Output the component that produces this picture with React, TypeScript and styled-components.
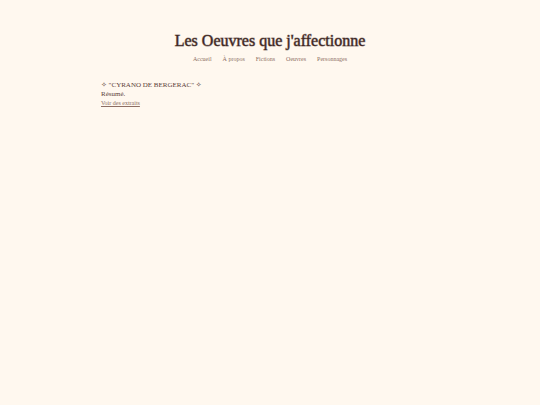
import styled, {createGlobalStyle} from "styled-components";

const links = [
    {label: "Accueil", href: "#accueil"},
    {label: "À propos", href: "#a-propos"},
    {label: "Fictions", href: "#fictions"},
    {label: "Oeuvres", href: "#oeuvres"},
    {label: "Personnages", href: "#personnages"},
];

export default function App() {
    return <>
        <GlobalStyle/>
        <Page>
            <Header>
                <Title>Les Oeuvres que j'affectionne</Title>
                <Nav>
                    {links.map(({label, href}) => (
                        <NavLink key={href} href={href}>{label}</NavLink>
                    ))}
                </Nav>
            </Header>
            <Main>
                <Work>
                    <WorkTitle>✧ "CYRANO DE BERGERAC" ✧</WorkTitle>
                    <Summary>Résumé.</Summary>
                    <ExtractLink href="#extraits">Voir des extraits</ExtractLink>
                </Work>
            </Main>
        </Page>
    </>
}

const GlobalStyle = createGlobalStyle`
    body {
        margin: 0;
        background-color: #fff8ef;
        color: #5d4037;
        font-family: "Liberation Serif", "DejaVu Sans", serif;
        font-size: 7px;
        line-height: 9px;
    }
`;

const Page = styled.div`
    display: flex;
    flex-direction: column;
    gap: 17px;
    padding: 28px 20px;
`;

const Header = styled.header`
    display: flex;
    flex-direction: column;
    align-items: center;
    gap: 2px;
`;

const Title = styled.h1`
    margin: 0;
    color: #3e2723;
    font-size: 16px;
    font-weight: 400;
    line-height: 25px;
    text-align: center;
    -webkit-text-stroke: 1px #3e272380;
`;

const Nav = styled.nav`
    display: flex;
    flex-wrap: wrap;
    justify-content: center;
    gap: 11px;
`;

const NavLink = styled.a`
    color: #8d6e63;
    font-size: 6px;
    text-decoration: none;

    &:hover {
        text-decoration: underline;
    }
`;

const Main = styled.main`
    box-sizing: border-box;
    width: 100%;
    max-width: 338px;
    margin: 0 auto;
`;

const Work = styled.article`
    display: flex;
    flex-direction: column;
    align-items: flex-start;
`;

const WorkTitle = styled.h2`
    margin: 0;
    font-size: 7px;
    font-weight: 400;
`;

const Summary = styled.p`
    margin: 0;
`;

const ExtractLink = styled.a`
    color: #8d6e63;
    font-size: 6px;
`;
